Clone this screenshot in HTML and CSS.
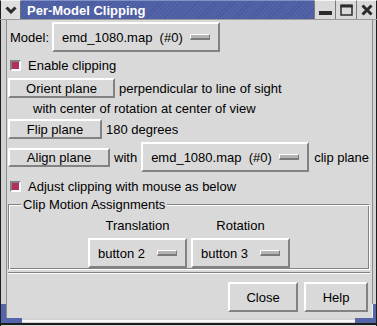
FILE: index.html
```html
<!DOCTYPE html>
<html lang="en">
    <head>
        <meta charset="UTF-8" />
        <title>Per-Model Clipping</title>
        <link rel="stylesheet" href="styles.css">
    </head>
    <body>
        <div class="window">
            <div class="titlebar">
                <div class="wm-menu">
                    <svg width="12" height="8" viewBox="0 0 12 8"><path d="M1.5 1.5 L6 6 L10.5 1.5" fill="none" stroke="#2b2b2b" stroke-width="3"/></svg>
                </div>
                <div class="wm-title">Per-Model Clipping</div>
                <div class="wm-btn">
                    <svg width="13" height="12" viewBox="0 0 13 12"><rect x="0" y="7" width="13" height="4" fill="#2b2b2b"/></svg>
                </div>
                <div class="wm-btn">
                    <svg width="13" height="12" viewBox="0 0 13 12"><rect x="1" y="1.5" width="11" height="9.5" fill="none" stroke="#2b2b2b" stroke-width="1.5"/><rect x="0.5" y="0.5" width="12" height="3" fill="#2b2b2b"/></svg>
                </div>
                <div class="wm-btn">
                    <svg width="12" height="12" viewBox="0 0 12 12"><path d="M1.5 1.5 L10.5 10.5 M10.5 1.5 L1.5 10.5" stroke="#2b2b2b" stroke-width="3"/></svg>
                </div>
            </div>
            <div class="middle">
                <div class="side side-left"></div>
                <div class="content">
                    <div class="row row-model">
                        <span class="label">Model:</span>
                        <div class="menubutton"><span>emd_1080.map&nbsp;&nbsp;(#0)</span><span class="indicator"></span></div>
                    </div>
                    <div class="row row-check">
                        <span class="checkbox"></span>
                        <span>Enable clipping</span>
                    </div>
                    <div class="row row-orient">
                        <div class="button btn-orient">Orient plane</div>
                        <span>perpendicular to line of sight</span>
                    </div>
                    <div class="row row-note">with center of rotation at center of view</div>
                    <div class="row row-flip">
                        <div class="button btn-flip">Flip plane</div>
                        <span>180 degrees</span>
                    </div>
                    <div class="row row-align">
                        <div class="button btn-align">Align plane</div>
                        <span>with</span>
                        <div class="menubutton"><span>emd_1080.map&nbsp;&nbsp;(#0)</span><span class="indicator"></span></div>
                        <span>clip plane</span>
                    </div>
                    <div class="row row-check row-adjust">
                        <span class="checkbox"></span>
                        <span>Adjust clipping with mouse as below</span>
                    </div>
                    <fieldset class="group">
                        <legend>Clip Motion Assignments</legend>
                        <div class="assign">
                            <span class="col-title">Translation</span>
                            <span class="col-title">Rotation</span>
                            <div class="menubutton small"><span>button 2</span><span class="indicator"></span></div>
                            <div class="menubutton small"><span>button 3</span><span class="indicator"></span></div>
                        </div>
                    </fieldset>
                    <div class="separator"></div>
                    <div class="actions">
                        <div class="button btn-close">Close</div>
                        <div class="button btn-help">Help</div>
                    </div>
                </div>
                <div class="side side-right"></div>
            </div>
            <div class="bottom">
                <div class="corner"></div>
                <div class="bottom-edge"></div>
                <div class="corner"></div>
            </div>
        </div>
    </body>
</html>
```

FILE: styles.css
```css
* {
    margin: 0;
    padding: 0;
    box-sizing: border-box;
}
body {
    width: 377px;
    height: 326px;
    overflow: hidden;
    background: #d9d9d9;
    color: #000;
    font-family: "Liberation Sans", Arial, sans-serif;
    font-size: 13px;
}
.window {
    width: 377px;
    height: 326px;
    display: flex;
    flex-direction: column;
}

/* window manager title bar */
.titlebar {
    height: 20px;
    display: flex;
    border-bottom: 1px solid #9a9a9a;
    background: #d9d9d9;
}
.wm-menu {
    width: 21px;
    display: flex;
    align-items: center;
    justify-content: center;
    background: #dedede;
    border-top: 1px solid #f4f4f4;
    border-left: 1px solid #1c1c1c;
    border-right: 1px solid #6e6e6e;
}
.wm-title {
    flex: 1;
    padding-left: 6px;
    line-height: 19px;
    color: #fff;
    font-weight: bold;
    background: repeating-linear-gradient(135deg, #5263a8 0 2px, #4a5a9e 2px 3px);
    border-top: 1px solid #8290c8;
}
.wm-btn {
    width: 21px;
    display: flex;
    align-items: center;
    justify-content: center;
    background: #d9d9d9;
    border-left: 1px solid #7a7a7a;
    border-top: 1px solid #f4f4f4;
}
.wm-btn:last-child {
    border-right: 1px solid #1c1c1c;
}

/* frame sides */
.middle {
    flex: 1;
    display: flex;
}
.side-left {
    width: 7px;
    background:
        linear-gradient(to right, #1c1c1c 0 1px, #5565a9 1px 6px, #8c8c8c 6px 7px) no-repeat left bottom / 7px 14px,
        linear-gradient(to right, #1c1c1c 0 1px, #d2d2d2 1px 6px, #8c8c8c 6px 7px);
}
.side-right {
    width: 5px;
    background:
        linear-gradient(to right, #f0f0f0 0 1px, #5565a9 1px 4px, #1c1c1c 4px 5px) no-repeat left bottom / 5px 14px,
        linear-gradient(to right, #8c8c8c 0 1px, #d2d2d2 1px 4px, #1c1c1c 4px 5px);
}
.bottom {
    height: 8px;
    display: flex;
}
.corner {
    width: 22px;
    background: linear-gradient(to bottom, #5565a9 0 5px, #1c1c1c 5px 7px, #d9d9d9 7px);
}
.corner:first-child {
    border-left: 1px solid #1c1c1c;
}
.corner:last-child {
    border-right: 1px solid #1c1c1c;
}
.bottom-edge {
    flex: 1;
    background: linear-gradient(to bottom, #d2d2d2 0 2px, #f8f8f8 2px 4px, #d2d2d2 4px 5px, #1c1c1c 5px 7px, #d9d9d9 7px);
}

/* dialog content */
.content {
    flex: 1;
    display: flex;
    flex-direction: column;
    padding: 2px 2px 0 1px;
}
.row {
    display: flex;
    align-items: center;
    white-space: nowrap;
}
.row-model {
    gap: 3px;
    padding-left: 2px;
}
.row-check {
    height: 16px;
    margin-top: 5px;
    padding-left: 2px;
    gap: 7px;
}
.row-orient {
    margin-top: 5px;
    gap: 4px;
}
.row-note {
    height: 20px;
    padding-left: 25px;
}
.row-flip {
    margin-top: 1px;
    gap: 4px;
}
.row-align {
    margin-top: 3px;
    gap: 4px;
}
.row-align .menubutton {
    margin-right: 1px;
}
.row-adjust {
    margin-top: 6px;
}

.button {
    height: 20px;
    display: flex;
    align-items: center;
    justify-content: center;
    border: 2px solid;
    border-color: #fff #828282 #828282 #fff;
}
.btn-orient {
    width: 107px;
}
.btn-flip {
    width: 94px;
}
.btn-align {
    width: 102px;
    height: 19px;
}
.menubutton {
    width: 168px;
    height: 30px;
    display: flex;
    align-items: center;
    justify-content: space-between;
    padding: 0 8px;
    border: 2px solid;
    border-color: #fff #828282 #828282 #fff;
}
.menubutton.small {
    width: 99px;
    height: 30px;
    padding: 0 8px;
}
.indicator {
    width: 20px;
    height: 6px;
    background: #b4b4b4;
    border: 1px solid;
    border-color: #fff #7a7a7a #7a7a7a #fff;
    border-bottom-width: 2px;
}
.checkbox {
    width: 11px;
    height: 11px;
    background: #b03060;
    border: 2px solid;
    border-color: #828282 #fff #fff #828282;
}

/* labelled frame */
.group {
    margin-top: 3px;
    border: 1px solid;
    border-color: #828282 #fff #fff #828282;
    box-shadow: inset 1px 1px #fff, inset -1px -1px #828282;
    padding: 0 0 1px;
}
.group legend {
    margin-left: 12px;
    padding: 0 2px;
    line-height: 15px;
    background: #d9d9d9;
}
.assign {
    display: grid;
    grid-template-columns: 99px 99px;
    column-gap: 4px;
    row-gap: 5px;
    justify-content: center;
    justify-items: center;
    padding-top: 6px;
}
.col-title {
    line-height: 15px;
}
.separator {
    margin-top: 2px;
    border-top: 1px solid #828282;
    border-bottom: 1px solid #fff;
}
.actions {
    margin-top: 8px;
    display: flex;
    justify-content: flex-end;
    gap: 6px;
    padding-right: 2px;
}
.btn-close {
    width: 70px;
    height: 30px;
}
.btn-help {
    width: 64px;
    height: 30px;
}
```
